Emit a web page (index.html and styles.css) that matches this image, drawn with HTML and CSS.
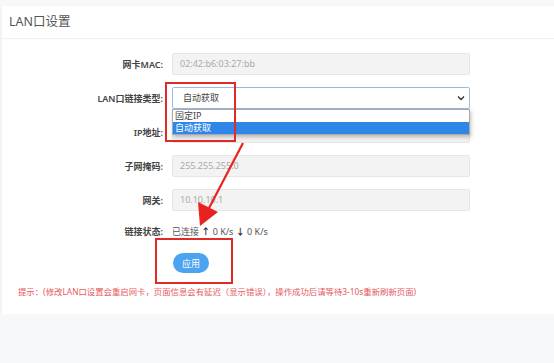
FILE: index.html
```html
<!DOCTYPE html>
<html lang="zh-CN">
<head>
  <meta charset="UTF-8" />
  <meta name="viewport" content="width=device-width, initial-scale=1.0"/>
  <title>LAN口设置</title>
  <link rel="stylesheet" href="styles.css">
</head>
<body>
  <div class="card">
    <div class="card-head">LAN口设置</div>

    <div class="form">
      <div class="row">
        <label>网卡MAC:</label>
        <div class="field disabled">02:42:b6:03:27:bb</div>
      </div>
      <div class="row">
        <label>LAN口链接类型:</label>
        <div class="select-wrap">
          <div class="field select">
            <span>自动获取</span>
            <svg width="8" height="6" viewBox="0 0 8 6"><path d="M1 1.5 L4 4.5 L7 1.5" fill="none" stroke="#333" stroke-width="1.4"/></svg>
          </div>
          <div class="options">
            <div class="option">固定IP</div>
            <div class="option active">自动获取</div>
          </div>
        </div>
      </div>
      <div class="row">
        <label>IP地址:</label>
        <div class="field disabled"></div>
      </div>
      <div class="row">
        <label>子网掩码:</label>
        <div class="field disabled">255.255.255.0</div>
      </div>
      <div class="row">
        <label>网关:</label>
        <div class="field disabled">10.10.10.1</div>
      </div>
      <div class="row status-row">
        <label>链接状态:</label>
        <div class="status">已连接 <b>&#8593;</b> 0 K/s <b>&#8595;</b> 0 K/s</div>
      </div>
      <div class="actions">
        <button>应用</button>
      </div>
    </div>

    <div class="tip">提示：(修改LAN口设置会重启网卡，页面信息会有延迟（显示错误），操作成功后请等待3-10s重新刷新页面)</div>

    <!-- annotation marks -->
    <div class="mark mark-select"></div>
    <div class="mark mark-button"></div>
    <svg class="arrow" width="80" height="100" viewBox="0 0 80 100">
      <line x1="73" y1="3" x2="38" y2="70" stroke="#e8231f" stroke-width="2.2"/>
      <polygon points="30,86 28,62 48,72" fill="#e8231f"/>
    </svg>
  </div>
</body>
</html>
```

FILE: styles.css
```css
body {
  margin: 0;
  background: #f7f8fa;
  font-family: "Noto Sans", "Noto Sans CJK SC", sans-serif;
  font-size: 9px;
  color: #333;
}

.card {
  position: relative;
  margin: 6px 0 0 2px;
  background: #fff;
  box-shadow: 0 2px 6px rgba(0, 0, 0, 0.06);
  padding-bottom: 16px;
}

.card-head {
  height: 32px;
  line-height: 32px;
  padding-left: 7px;
  font-size: 12.5px;
  color: #555;
  border-bottom: 1px solid #f0f0f0;
}

.form {
  padding-top: 14px;
  display: flex;
  flex-direction: column;
  gap: 12px;
}

.row {
  display: grid;
  grid-template-columns: 161px 298px;
  column-gap: 9px;
  align-items: center;
}

.row label {
  text-align: right;
  font-weight: 600;
  color: #444;
}

.field {
  box-sizing: border-box;
  height: 22px;
  line-height: 20px;
  padding: 0 7px;
  border: 1px solid #e6e6e6;
  border-radius: 2px;
}

.field.disabled {
  background: #f3f3f3;
  color: #aaa;
}

.select-wrap {
  position: relative;
}

.field.select {
  display: flex;
  justify-content: space-between;
  align-items: center;
  border-color: #9db8e8;
  padding: 0 4px 0 10px;
  color: #444;
}

.options {
  position: absolute;
  top: 22px;
  left: 0;
  right: 0;
  background: #fff;
  border: 1px solid #aaa;
  box-shadow: 1px 2px 4px rgba(0, 0, 0, 0.25);
  z-index: 2;
}

.option {
  height: 12px;
  line-height: 12px;
  padding-left: 2px;
  color: #444;
}

.option.active {
  background: #2d86e8;
  color: #fff;
}

.status-row {
  line-height: 18px;
}

.status {
  color: #555;
}

.status b {
  color: #333;
  font-weight: 700;
}

.actions {
  padding-left: 171px;
}

.actions button {
  width: 36px;
  height: 20px;
  border: none;
  border-radius: 10px;
  background: #4ca3ef;
  color: #fff;
  font-family: inherit;
  font-size: 9px;
  padding: 0;
}

.tip {
  margin-top: 13px;
  padding-left: 16px;
  line-height: 12px;
  font-size: 8.4px;
  color: #e6595c;
}

.mark {
  position: absolute;
  border: 2px solid #e02a26;
  box-sizing: border-box;
  z-index: 3;
}

.mark-select {
  left: 163px;
  top: 76px;
  width: 71px;
  height: 60px;
}

.mark-button {
  left: 153px;
  top: 232px;
  width: 78px;
  height: 46px;
}

.arrow {
  position: absolute;
  left: 168px;
  top: 134px;
  z-index: 3;
}
```
